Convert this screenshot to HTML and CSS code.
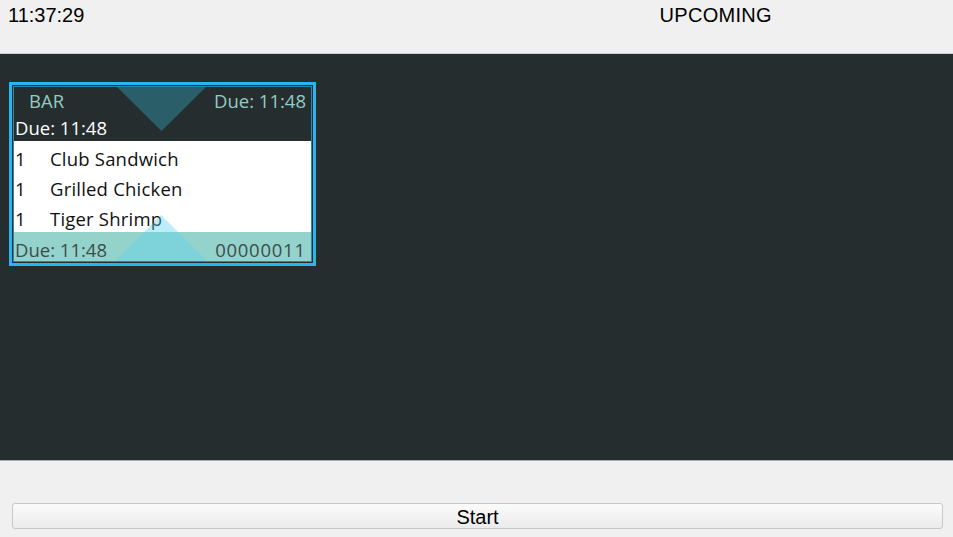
FILE: index.html
```html
<!DOCTYPE html>
<html>
<head>
<meta charset="utf-8">
<link rel="stylesheet" href="styles.css">
</head>
<body>
<div class="app">
  <header class="topbar">
    <div class="clock">11:37:29</div>
    <div class="title">UPCOMING</div>
  </header>
  <main class="board">
    <div class="card">
      <div class="card-inner">
        <div class="card-head">
          <div class="head-row">
            <span class="station">BAR</span>
            <span class="due-top">Due: 11:48</span>
          </div>
          <div class="head-row2">Due: 11:48</div>
        </div>
        <div class="card-body">
          <div class="item"><span class="qty">1</span><span class="name">Club Sandwich</span></div>
          <div class="item"><span class="qty">1</span><span class="name">Grilled Chicken</span></div>
          <div class="item"><span class="qty">1</span><span class="name">Tiger Shrimp</span></div>
        </div>
        <div class="card-foot">
          <span>Due: 11:48</span>
          <span class="order-no">00000011</span>
        </div>
        <div class="tri tri-top"></div>
        <div class="tri tri-bottom"></div>
      </div>
    </div>
  </main>
  <footer class="actions">
    <button class="start-btn">Start</button>
  </footer>
</div>
</body>
</html>
```
FILE: styles.css
```css
html, body {
  margin: 0;
  padding: 0;
  background: #f0f0f0;
}
.app {
  width: 953px;
  height: 537px;
  display: flex;
  flex-direction: column;
  font-family: "Liberation Sans", Arial, sans-serif;
}
.topbar {
  height: 53px;
  flex: none;
  box-sizing: border-box;
  display: grid;
  grid-template-columns: 1fr 1fr;
  padding-top: 5px;
  font-size: 20px;
  line-height: 20px;
  color: #000;
  background: #f0f0f0;
}
.clock {
  padding-left: 8px;
}
.title {
  text-align: center;
  padding-left: 2px;
  letter-spacing: 0.3px;
}
.board {
  height: 408px;
  flex: none;
  box-sizing: border-box;
  background: #252d2f;
  border-top: 1px solid #cfd2d2;
  border-bottom: 1px solid #a9adad;
  padding: 28px 9px 0 9px;
}
.card {
  width: 307px;
  box-sizing: border-box;
  border: 3px solid #29b5ef;
  padding: 1px;
  background: #252d2f;
  font-family: "Open Sans", "Noto Sans", sans-serif;
  font-size: 18.5px;
}
.card-inner {
  position: relative;
  border: 1px solid #2b86ad;
  overflow: hidden;
}
.card-head {
  height: 54px;
  background: #252d2f;
}
.head-row {
  height: 27px;
  line-height: 27px;
  display: flex;
  justify-content: space-between;
  color: #93cbc2;
  padding: 0 5px 0 15px;
}
.head-row2 {
  height: 27px;
  line-height: 27px;
  color: #ffffff;
  padding-left: 1px;
}
.card-body {
  background: #ffffff;
  padding-top: 3px;
  height: 91px;
  box-sizing: border-box;
  color: #111;
}
.item {
  display: flex;
  height: 30px;
  line-height: 30px;
}
.qty {
  width: 36px;
  flex: none;
  padding-left: 1px;
  box-sizing: border-box;
}
.name {
  letter-spacing: 0.2px;
}
.card-foot {
  background: #94d3cb;
  color: #3c4c4c;
  display: flex;
  justify-content: space-between;
  padding: 7px 6px 0 1px;
  line-height: 22px;
}
.order-no {
  letter-spacing: 0.75px;
  margin-right: -0.75px;
}
.tri {
  position: absolute;
  pointer-events: none;
}
.tri-top {
  left: 103px;
  top: 0;
  width: 89px;
  height: 44px;
  background: #2a5f6a;
  clip-path: polygon(0 0, 100% 0, 50% 100%);
}
.tri-bottom {
  left: 101px;
  bottom: 0;
  width: 92px;
  height: 46px;
  background: rgba(90, 212, 237, 0.4);
  clip-path: polygon(50% 0, 100% 100%, 0 100%);
}
.actions {
  flex: 1;
  padding: 42px 10px 0 12px;
}
.start-btn {
  display: block;
  width: 100%;
  height: 26px;
  box-sizing: border-box;
  margin: 0;
  border: 1px solid #c8c8c8;
  border-radius: 3px;
  background: linear-gradient(#fbfbfb, #ebebeb);
  font-family: "Liberation Sans", Arial, sans-serif;
  font-size: 20px;
  line-height: 21px;
  padding: 3px 0 0 0;
  color: #000;
  text-align: center;
}
```
